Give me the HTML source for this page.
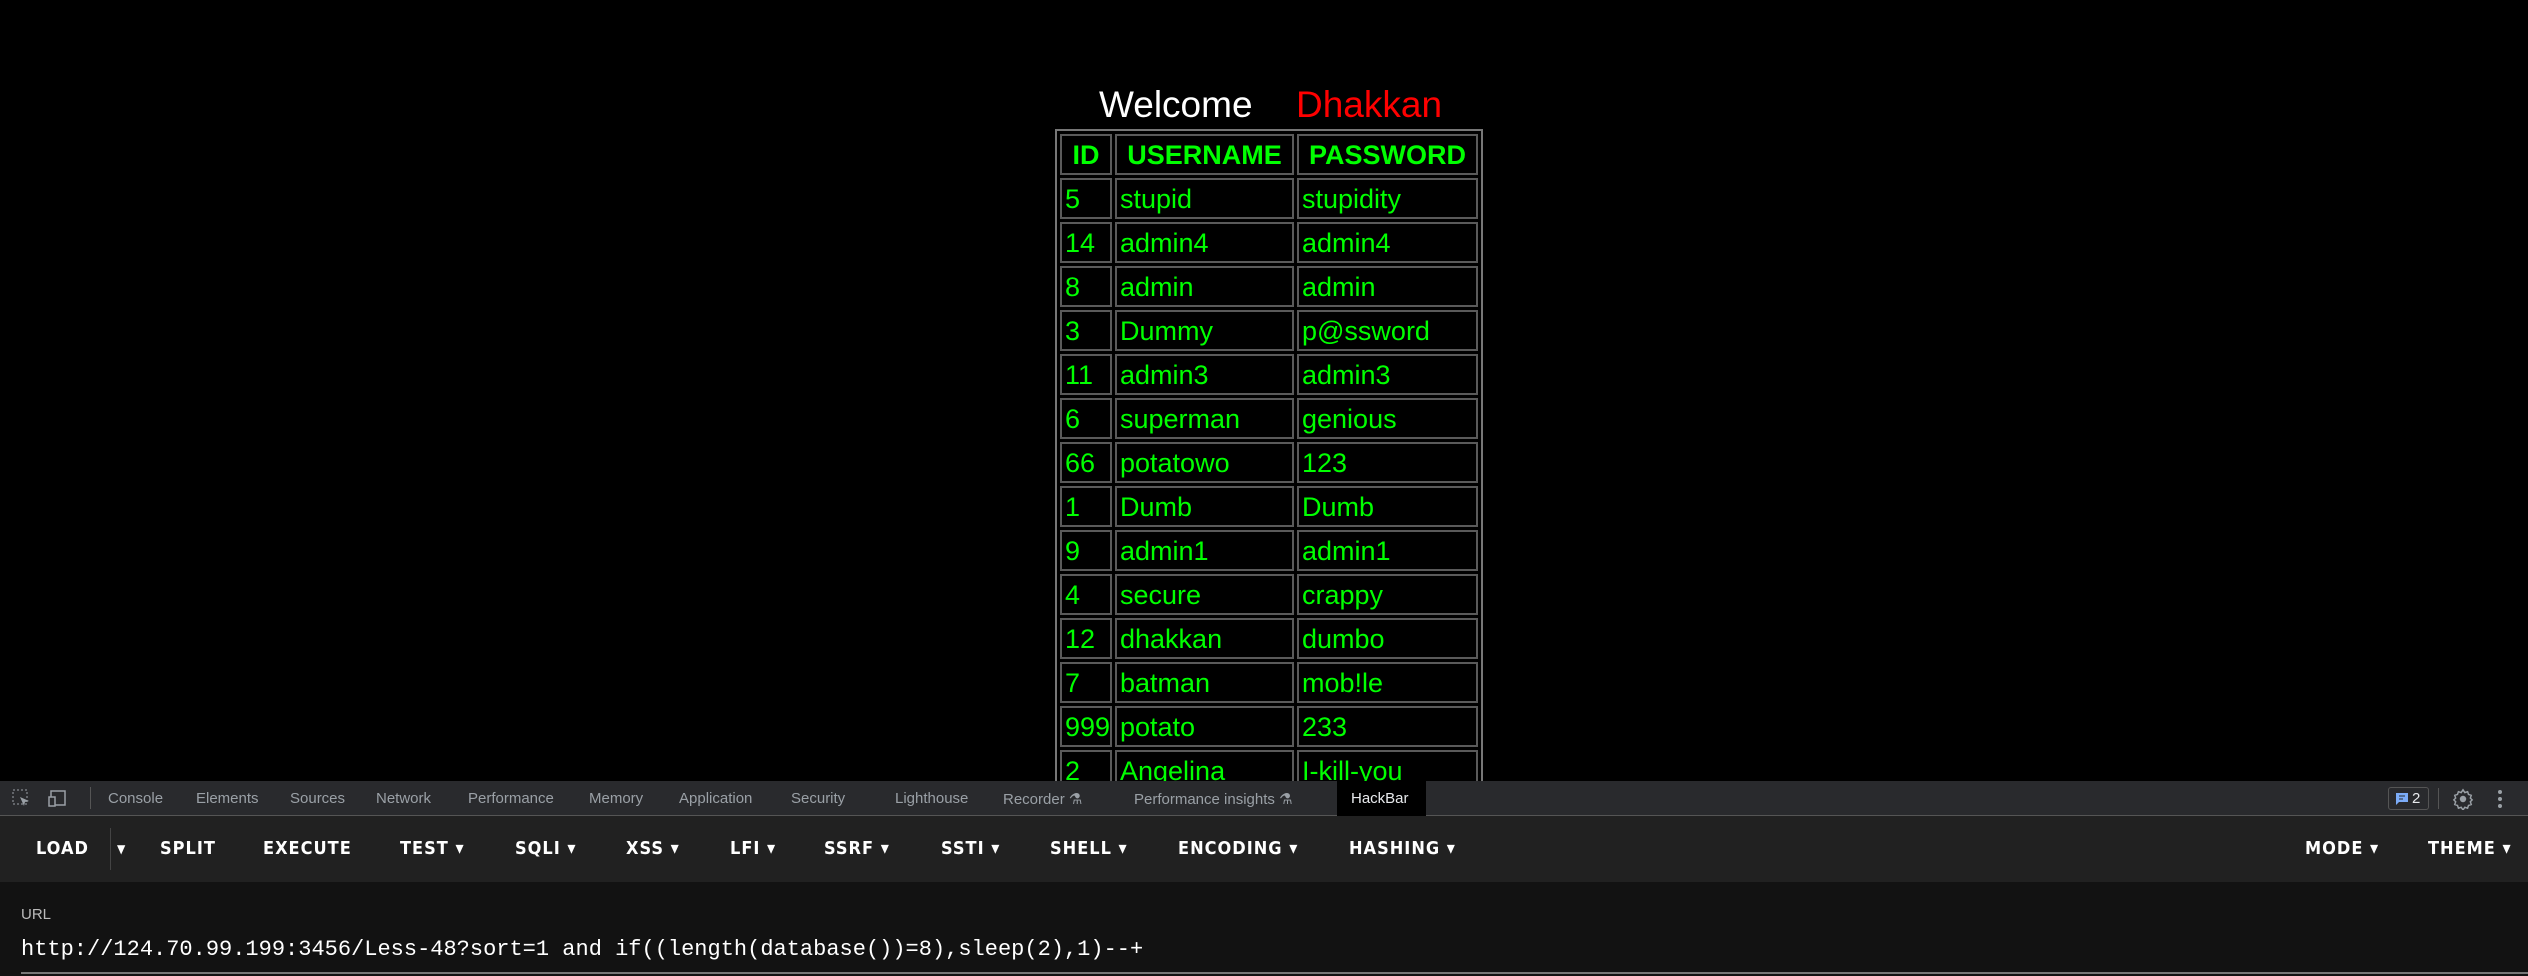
<!DOCTYPE html>
<html><head><meta charset="utf-8"><style>
*{margin:0;padding:0;box-sizing:border-box}
body{width:2528px;height:976px;background:#000;position:relative;overflow:hidden;font-family:"Liberation Sans",sans-serif}
.a{position:absolute;white-space:nowrap}
table{position:absolute;left:1055px;top:129px;width:426px;table-layout:fixed;border:2px solid #777;border-spacing:3px;border-collapse:separate;color:#00ff00;font-family:"Liberation Sans",sans-serif;font-size:27px}
td,th{border:2px solid #5a5a5a;height:41px;padding:0 3px;text-align:left;vertical-align:middle;line-height:36px;overflow:hidden;white-space:nowrap}
th{font-weight:bold;text-align:center;font-size:27px}
.tabs{left:0;top:781px;width:2528px;height:35px;background:#292a2d;border-bottom:1px solid #555}
.t{position:absolute;top:9px;color:#9aa0a6;font-size:15px}
.bar{left:0;top:816px;width:2528px;height:66px;background:#212121}
.b{position:absolute;top:22px;color:#fff;font-weight:bold;font-size:18px;letter-spacing:1px;font-family:"DejaVu Sans Condensed","Liberation Sans",sans-serif}
.url{left:0;top:882px;width:2528px;height:94px;background:#121212}
</style></head><body>
<div class="a" style="left:1099px;top:84px;font-size:37px;color:#fff">Welcome</div>
<div class="a" style="left:1296px;top:84px;font-size:37px;color:#f00">Dhakkan</div>
<table>
<colgroup><col style="width:52px"><col style="width:179px"><col style="width:181px"></colgroup>
<tr><th>ID</th><th>USERNAME</th><th>PASSWORD</th></tr>
<tr><td>5</td><td>stupid</td><td>stupidity</td></tr>
<tr><td>14</td><td>admin4</td><td>admin4</td></tr>
<tr><td>8</td><td>admin</td><td>admin</td></tr>
<tr><td>3</td><td>Dummy</td><td>p@ssword</td></tr>
<tr><td>11</td><td>admin3</td><td>admin3</td></tr>
<tr><td>6</td><td>superman</td><td>genious</td></tr>
<tr><td>66</td><td>potatowo</td><td>123</td></tr>
<tr><td>1</td><td>Dumb</td><td>Dumb</td></tr>
<tr><td>9</td><td>admin1</td><td>admin1</td></tr>
<tr><td>4</td><td>secure</td><td>crappy</td></tr>
<tr><td>12</td><td>dhakkan</td><td>dumbo</td></tr>
<tr><td>7</td><td>batman</td><td>mob!le</td></tr>
<tr><td>999</td><td>potato</td><td>233</td></tr>
<tr><td>2</td><td>Angelina</td><td>I-kill-you</td></tr>
</table>
<div class="a tabs">
<svg style="position:absolute;left:12px;top:8px" width="20" height="20"><rect x="1" y="1" width="14" height="14" fill="none" stroke="#9aa0a6" stroke-dasharray="2 2"/><path d="M8 8l9 4-4 1-1 4z" fill="#9aa0a6"/></svg>
<svg style="position:absolute;left:48px;top:8px" width="22" height="20"><rect x="3" y="2" width="14" height="14" fill="none" stroke="#9aa0a6" stroke-width="1.5"/><rect x="1" y="8" width="6" height="9" fill="#292a2d" stroke="#9aa0a6" stroke-width="1.5"/></svg>
<div style="position:absolute;left:90px;top:6px;width:1px;height:22px;background:#555"></div>
<span class="t" style="left:108px">Console</span><span class="t" style="left:196px">Elements</span><span class="t" style="left:290px">Sources</span><span class="t" style="left:376px">Network</span><span class="t" style="left:468px">Performance</span><span class="t" style="left:589px">Memory</span><span class="t" style="left:679px">Application</span><span class="t" style="left:791px">Security</span><span class="t" style="left:895px">Lighthouse</span><span class="t" style="left:1003px">Recorder ⚗</span><span class="t" style="left:1134px">Performance insights ⚗</span>
<div style="position:absolute;left:1337px;top:0;width:89px;height:35px;background:#000"></div><span class="t" style="left:1351px;color:#e8eaed">HackBar</span>
<div style="position:absolute;left:2388px;top:6px;width:41px;height:23px;border:1px solid #555;border-radius:3px"></div>
<svg style="position:absolute;left:2395px;top:11px" width="14" height="14"><path d="M1 1h12v9H4l-3 3z" fill="#7cacf8"/><path d="M4 4h6M4 7h4" stroke="#292a2d"/></svg>
<span class="t" style="left:2412px;color:#e8eaed">2</span>
<div style="position:absolute;left:2438px;top:7px;width:1px;height:21px;background:#555"></div>
<svg style="position:absolute;left:2452px;top:7px" width="22" height="22" viewBox="0 0 24 24"><path d="M12 2l2 3 3-1 1 3 3 1-1 3 2 2-2 2 1 3-3 1-1 3-3-1-2 3-2-3-3 1-1-3-3-1 1-3-2-2 2-2-1-3 3-1 1-3 3 1z" fill="none" stroke="#9aa0a6" stroke-width="1.6"/><circle cx="12" cy="12" r="3.5" fill="#9aa0a6"/></svg>
<svg style="position:absolute;left:2494px;top:8px" width="12" height="20"><circle cx="6" cy="3" r="2" fill="#9aa0a6"/><circle cx="6" cy="10" r="2" fill="#9aa0a6"/><circle cx="6" cy="17" r="2" fill="#9aa0a6"/></svg>
</div>
<div class="a bar">
<span class="b" style="left:36px">LOAD</span>
<div style="position:absolute;left:110px;top:12px;width:1px;height:42px;background:#444"></div>
<span class="b" style="left:117px;font-size:12px;top:26px">▼</span>
<span class="b" style="left:160px">SPLIT</span><span class="b" style="left:263px">EXECUTE</span><span class="b" style="left:400px">TEST ▾</span><span class="b" style="left:515px">SQLI ▾</span><span class="b" style="left:626px">XSS ▾</span><span class="b" style="left:730px">LFI ▾</span><span class="b" style="left:824px">SSRF ▾</span><span class="b" style="left:941px">SSTI ▾</span><span class="b" style="left:1050px">SHELL ▾</span><span class="b" style="left:1178px">ENCODING ▾</span><span class="b" style="left:1349px">HASHING ▾</span>
<span class="b" style="left:2305px">MODE ▾</span><span class="b" style="left:2428px">THEME ▾</span>
</div>
<div class="a url">
<span class="a" style="left:21px;top:24px;color:#bbb;font-size:15px">URL</span>
<span class="a" style="left:21px;top:55px;color:#fff;font-size:22px;font-family:'Liberation Mono',monospace">http://124.70.99.199:3456/Less-48?sort=1 and if((length(database())=8),sleep(2),1)--+</span>
<div style="position:absolute;left:21px;right:0;top:90px;height:2px;background:#777"></div>
</div>
</body></html>
